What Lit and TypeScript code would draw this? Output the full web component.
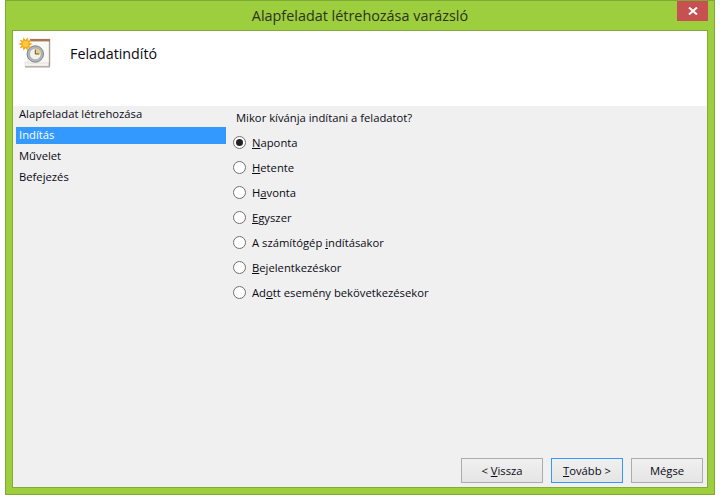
import { LitElement, html, css, svg } from "lit";
import { customElement } from "lit/decorators.js";

const options: [string, string, string][] = [
  ["", "N", "aponta"],
  ["", "H", "etente"],
  ["H", "a", "vonta"],
  ["", "E", "gyszer"],
  ["A számítógép ", "i", "ndításakor"],
  ["", "B", "ejelentkezéskor"],
  ["Ad", "o", "tt esemény bekövetkezésekor"],
];
const steps = ["Alapfeladat létrehozása", "Indítás", "Művelet", "Befejezés"];

const sunPoints = Array.from({ length: 20 }, (_, i) => {
  const r = i % 2 === 0 ? 7.2 : 4;
  const a = (i * Math.PI) / 10;
  return `${(6.5 + r * Math.cos(a)).toFixed(2)},${(8 + r * Math.sin(a)).toFixed(2)}`;
}).join(" ");

const icon = svg`<svg class="icon" width="32" height="34" viewBox="0 0 32 34">
  <rect x="6" y="27" width="25" height="4.5" fill="#a9a6a2"/>
  <rect x="6" y="26" width="23.5" height="4" fill="#f6f4ee" stroke="#d9d5cc" stroke-width=".6"/>
  <rect x="9" y="3" width="21" height="24" fill="#fbf9f3" stroke="#d4cfc3" stroke-width=".6"/>
  <rect x="30" y="3" width="1.2" height="27" fill="#a5a19b"/>
  <rect x="11" y="3" width="20" height="2.4" fill="#a6775a"/>
  <circle cx="16.3" cy="18" r="8.2" fill="#aeb7bf" stroke="#7b858e"/>
  <circle cx="16.3" cy="18" r="5.8" fill="#f6f1e2" stroke="#8d969e" stroke-width=".5"/>
  <path d="M16.3 18v-5.6a5.6 5.6 0 0 1 5.6 5.6z" fill="#efcf7a"/>
  <path d="M16.3 13.5V18h4" fill="none" stroke="#555" stroke-width="1"/>
  <polygon points=${sunPoints} fill="#f5a20f"/>
  <circle cx="6.5" cy="8" r="3.2" fill="#fdc93f"/>
</svg>`;

@customElement("app-root")
export class AppRoot extends LitElement {
  static styles = css`
    :host {
      display: block;
      width: 720px;
      height: 495px;
      background: #fff;
      font-family: "Open Sans", "Noto Sans", sans-serif;
      font-size: 11.25px;
      color: #0a0a14;
      overflow: hidden;
    }
    .window {
      box-sizing: border-box;
      width: 710px;
      height: 495px;
      margin-left: 5px;
      background: #9dce3e;
      border: 1px solid #7fa836;
      display: flex;
      flex-direction: column;
      position: relative;
    }
    .titlebar {
      height: 29px;
      flex: none;
      display: flex;
      align-items: center;
      justify-content: center;
      font-size: 14.4px;
      color: #2c3320;
    }
    .close {
      position: absolute;
      top: 0;
      right: 0;
      margin-right: 6px;
      width: 31px;
      height: 20px;
      background: #c75050;
      display: flex;
      align-items: center;
      justify-content: center;
    }
    .client {
      flex: 1;
      margin: 0 6px 6px 6px;
      border: 1px solid #85aa3a;
      background: #f0f0f0;
      display: flex;
      flex-direction: column;
      min-height: 0;
    }
    .header {
      height: 75px;
      flex: none;
      background: #fff;
      display: flex;
      align-items: flex-start;
      padding: 5px 0 0 6px;
      box-sizing: border-box;
    }
    .icon { flex: none; overflow: visible; }
    .header h1 {
      margin: 8px 0 0 19px;
      font-size: 14.3px;
      font-weight: 400;
      line-height: 20px;
      color: #0a0a14;
    }
    .body {
      flex: 1;
      display: flex;
      min-height: 0;
    }
    .steps {
      width: 210px;
      margin-left: 3px;
      flex: none;
      display: flex;
      flex-direction: column;
    }
    .step {
      height: 17px;
      line-height: 16px;
      padding-left: 3px;
      margin-bottom: 3.85px;
    }
    .step.active {
      background: #3399ff;
      color: #fff;
    }
    .main {
      flex: 1;
      display: flex;
      flex-direction: column;
      padding-left: 10px;
      min-width: 0;
    }
    .question {
      margin-top: 3px;
      line-height: 17px;
    }
    .options {
      display: flex;
      flex-direction: column;
      gap: 8px;
      margin-top: 8px;
      margin-left: -3px;
    }
    .option {
      display: flex;
      align-items: center;
      height: 17px;
      gap: 6px;
    }
    .radio {
      box-sizing: border-box;
      width: 13px;
      height: 13px;
      border-radius: 50%;
      border: 1px solid #707070;
      background: #fff;
      flex: none;
      display: flex;
      align-items: center;
      justify-content: center;
    }
    .dot {
      width: 7px;
      height: 7px;
      border-radius: 50%;
      background: #222;
    }
    .footer {
      margin-top: auto;
      display: flex;
      justify-content: flex-end;
      gap: 8px;
      padding: 0 4px 4px 0;
    }
    .btn {
      box-sizing: border-box;
      height: 25px;
      border: 1px solid #acacac;
      background: linear-gradient(#f0f0f0, #e5e5e5);
      display: flex;
      align-items: center;
      justify-content: center;
      font: inherit;
      color: inherit;
      padding: 0;
    }
    .back { width: 82px; }
    .next { width: 72px; border-color: #3399ff; }
    .cancel { width: 72px; }
    u { text-underline-offset: 1px; }
  `;

  render() {
    return html`<div class="window">
      <div class="titlebar">Alapfeladat létrehozása varázsló</div>
      <div class="close">
        <svg width="10" height="8" viewBox="0 0 10 8"><path d="M1 0.5l8 7M9 0.5l-8 7" stroke="#fff" stroke-width="2" fill="none"/></svg>
      </div>
      <div class="client">
        <div class="header">${icon}<h1>Feladatindító</h1></div>
        <div class="body">
          <div class="steps">
            ${steps.map((s, i) => html`<div class="step ${i === 1 ? "active" : ""}">${s}</div>`)}
          </div>
          <div class="main">
            <div class="question">Mikor kívánja indítani a feladatot?</div>
            <div class="options">
              ${options.map(([a, k, b], i) => html`<div class="option">
                <span class="radio">${i === 0 ? html`<span class="dot"></span>` : ""}</span>
                <span>${a}<u>${k}</u>${b}</span>
              </div>`)}
            </div>
            <div class="footer">
              <button class="btn back">&lt;&nbsp;<u>V</u>issza</button>
              <button class="btn next"><u>T</u>ovább &gt;</button>
              <button class="btn cancel">Mégse</button>
            </div>
          </div>
        </div>
      </div>
    </div>`;
  }
}
